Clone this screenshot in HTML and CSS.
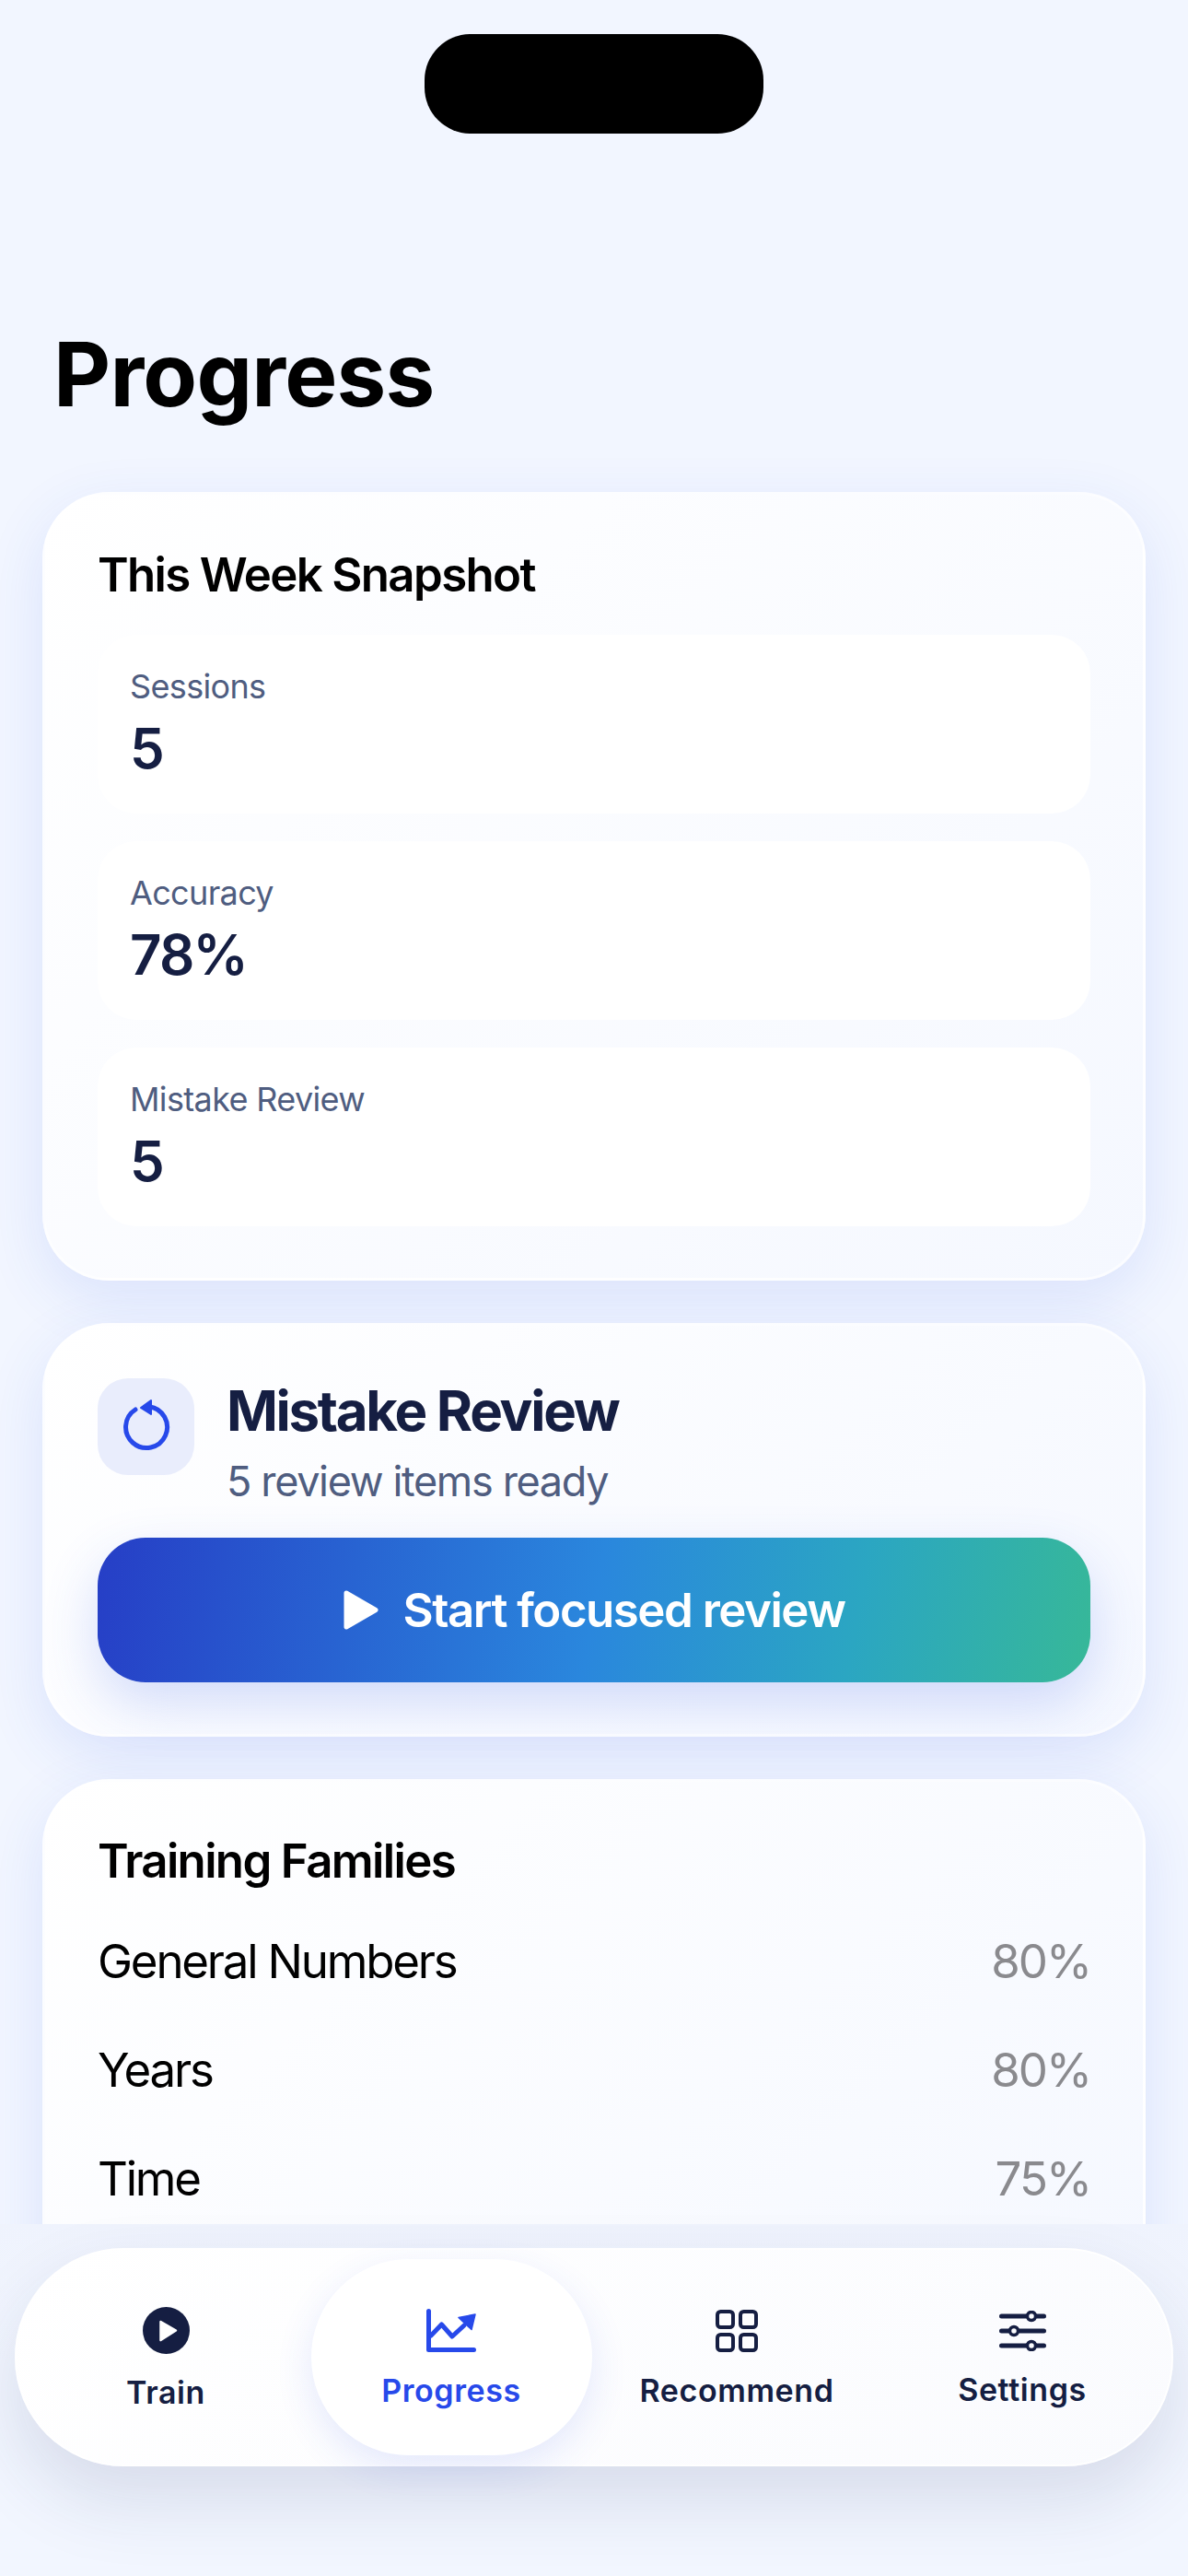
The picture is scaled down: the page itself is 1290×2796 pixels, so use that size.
FILE: index.html
```html
<!DOCTYPE html>
<html lang="en">
<head>
<meta charset="utf-8">
<title>Progress</title>
<link rel="stylesheet" href="styles.css">
</head>
<body>
<div class="island"></div>
<main class="scroll">
  <h1 class="title">Progress</h1>
  <section class="card snapshot">
    <h2 class="card-title">This Week Snapshot</h2>
    <div class="tiles">
      <div class="tile"><div class="tile-label">Sessions</div><div class="tile-value">5</div></div>
      <div class="tile"><div class="tile-label">Accuracy</div><div class="tile-value">78%</div></div>
      <div class="tile"><div class="tile-label">Mistake Review</div><div class="tile-value">5</div></div>
    </div>
  </section>
  <section class="card review">
    <div class="review-head">
      <div class="review-icon">
        <svg class="refresh" width="54" height="58" viewBox="0 -4 54 58" fill="none"><path d="M15 8A22.500 22.500 0 1 0 30 4.700" stroke="#2749ea" stroke-width="5" stroke-linecap="round"/><path d="M32 -2L32 13L21 6Z" fill="#2749ea" stroke="#2749ea" stroke-width="2" stroke-linejoin="round"/></svg>
      </div>
      <div class="review-text">
        <div class="review-title">Mistake Review</div>
        <div class="review-sub">5 review items ready</div>
      </div>
    </div>
    <button class="cta">
      <svg width="38" height="43" viewBox="0 0 38 43"><path d="M3 3L35 21.500L3 40Z" fill="#fff" stroke="#fff" stroke-width="5" stroke-linejoin="round"/></svg>
      <span>Start focused review</span>
    </button>
  </section>
  <section class="card families">
    <h2 class="card-title">Training Families</h2>
    <div class="family"><span>General Numbers</span><span class="pct">80%</span></div>
    <div class="family"><span>Years</span><span class="pct">80%</span></div>
    <div class="family"><span>Time</span><span class="pct">75%</span></div>
  </section>
</main>
<div class="dock">
  <nav class="nav">
    <a class="nav-item">
      <svg width="51" height="51" viewBox="0 0 51 51"><circle cx="25.500" cy="25.500" r="25.500" fill="#151e42"/><path d="M19.500 16L36 25.500L19.500 36Z" fill="#fff" stroke="#fff" stroke-width="2.500" stroke-linejoin="round"/></svg>
      <span class="nav-label">Train</span>
    </a>
    <a class="nav-item active">
      <svg width="54" height="47" viewBox="0 0 54 47" fill="none"><path d="M2.500 2.500V44.500H51.500" stroke="#2749ea" stroke-width="5" stroke-linecap="round" stroke-linejoin="round"/><path d="M5 29L16.500 17L28 30L41 18" stroke="#2749ea" stroke-width="5" stroke-linecap="round" stroke-linejoin="round"/><path d="M35 9.500L53 6L49 22.500Z" fill="#2749ea" stroke="#2749ea" stroke-width="1.500" stroke-linejoin="round"/></svg>
      <span class="nav-label">Progress</span>
    </a>
    <a class="nav-item">
      <svg width="46" height="46" viewBox="0 0 46 46" fill="none" stroke="#151e42" stroke-width="4"><rect x="2" y="2" width="17" height="17" rx="3.500"/><rect x="27" y="2" width="17" height="17" rx="3.500"/><rect x="2" y="27" width="17" height="17" rx="3.500"/><rect x="27" y="27" width="17" height="17" rx="3.500"/></svg>
      <span class="nav-label">Recommend</span>
    </a>
    <a class="nav-item">
      <svg width="51" height="44" viewBox="0 0 51 44" fill="none" stroke="#151e42" stroke-width="5" stroke-linecap="round"><path d="M2.500 6H29M41 6H48.500M2.500 22H10M22 22H48.500M2.500 38H29M41 38H48.500"/><g stroke-width="3.500"><circle cx="35" cy="6" r="4.500"/><circle cx="16" cy="22" r="4.500"/><circle cx="35" cy="38" r="4.500"/></g></svg>
      <span class="nav-label">Settings</span>
    </a>
  </nav>
</div>
</body>
</html>
```

FILE: styles.css
```css
* { box-sizing: border-box; }
html, body { margin: 0; padding: 0; }
body {
  position: relative;
  width: 1290px;
  height: 2796px;
  overflow: hidden;
  background: #f2f6ff;
  font-family: Inter, "Liberation Sans", sans-serif;
  display: flex;
  flex-direction: column;
}
.island {
  position: absolute;
  left: 461px;
  top: 37px;
  width: 368px;
  height: 108px;
  border-radius: 50px;
  background: #000;
}
.scroll {
  height: 2414px;
  overflow: hidden;
  padding: 348px 46px 0;
  display: flex;
  flex-direction: column;
  flex: none;
}
.title {
  margin: 0 0 70px 12px;
  font-size: 96px;
  line-height: 116px;
  font-weight: 700;
  color: #000;
  letter-spacing: -.8px;
}
.card {
  flex: none;
  border-radius: 72px;
  border: 3px solid rgba(255,255,255,.55);
  background: linear-gradient(135deg, #ffffff 0%, #f5f8ff 100%);
  box-shadow: 0 20px 64px rgba(50,90,230,.12);
  padding: 57px;
  margin-bottom: 46px;
}
.snapshot { height: 856px; padding-top: 56px; }
.card-title {
  margin: 0;
  font-size: 51px;
  line-height: 62px;
  font-weight: 600;
  color: #000;
  letter-spacing: -1.650px;
}
.tiles { margin-top: 34px; display: flex; flex-direction: column; gap: 30px; }
.tile {
  height: 194px;
  border-radius: 42px;
  background: rgba(255,255,255,.95);
  padding: 34px 35px;
}
.tile-label { font-size: 36px; line-height: 44px; color: #4f5d80; letter-spacing: -.65px; }
.tile-value { margin-top: 9px; font-size: 60px; line-height: 72px; font-weight: 600; color: #151e42; letter-spacing: -1.800px; }
.review { height: 449px; padding-top: 57px; }
.review-head { display: flex; gap: 35px; align-items: flex-start; }
.review-icon {
  flex: none;
  width: 105px;
  height: 105px;
  border-radius: 33px;
  background: #e9edfc;
  display: flex;
  align-items: center;
  justify-content: center;
}
.refresh { margin-top: -4px; }
.review-title { font-size: 60px; line-height: 70px; font-weight: 700; color: #151e42; letter-spacing: -2.300px; }
.review-sub { margin-top: 15px; font-size: 45px; line-height: 54px; color: #4f5d80; letter-spacing: -1.350px; }
.cta {
  margin-top: 34px;
  width: 100%;
  height: 157px;
  border: 0;
  border-radius: 52px;
  background: linear-gradient(100deg, #263ec6 0%, #2a87dd 50%, #2ba6c2 76%, #37b898 100%);
  box-shadow: 0 24px 60px rgba(50,90,230,.2);
  display: flex;
  align-items: center;
  justify-content: center;
  gap: 27px;
  color: #fff;
  font-family: inherit;
  font-size: 51px;
  font-weight: 600;
  letter-spacing: -1.500px;
}
.families { height: 600px; padding-top: 55px; }
.family {
  display: flex;
  justify-content: space-between;
  align-items: center;
  height: 118px;
  font-size: 51px;
  color: #000;
  letter-spacing: -2.200px;
}
.card-title + .family { margin-top: 18px; }
.pct { color: #8a8a8e; letter-spacing: -2px; }
.dock {
  flex: 1;
  padding: 26px 16px 0;
  background: linear-gradient(180deg, #eff3fd, #f2f6ff 40%);
}
.nav {
  height: 237px;
  border-radius: 118px;
  background: linear-gradient(135deg, #ffffff, #fafbfe);
  border: 2px solid rgba(255,255,255,.9);
  box-shadow: 0 36px 80px rgba(30,45,90,.13);
  display: grid;
  grid-template-columns: repeat(4, 1fr);
  padding: 10px 7px 0;
  align-items: start;
}
.nav-item {
  height: 213px;
  padding-top: 5px;
  display: flex;
  flex-direction: column;
  align-items: center;
  justify-content: center;
  gap: 21px;
  color: #151e42;
}
.nav-label { font-size: 34px; line-height: 42px; font-weight: 600; letter-spacing: .6px; }
.nav-item.active {
  width: 305px;
  justify-self: center;
  color: #2749ea;
  background: #fff;
  border-radius: 106px;
  box-shadow: 0 14px 40px rgba(50,80,230,.12);
}
```
